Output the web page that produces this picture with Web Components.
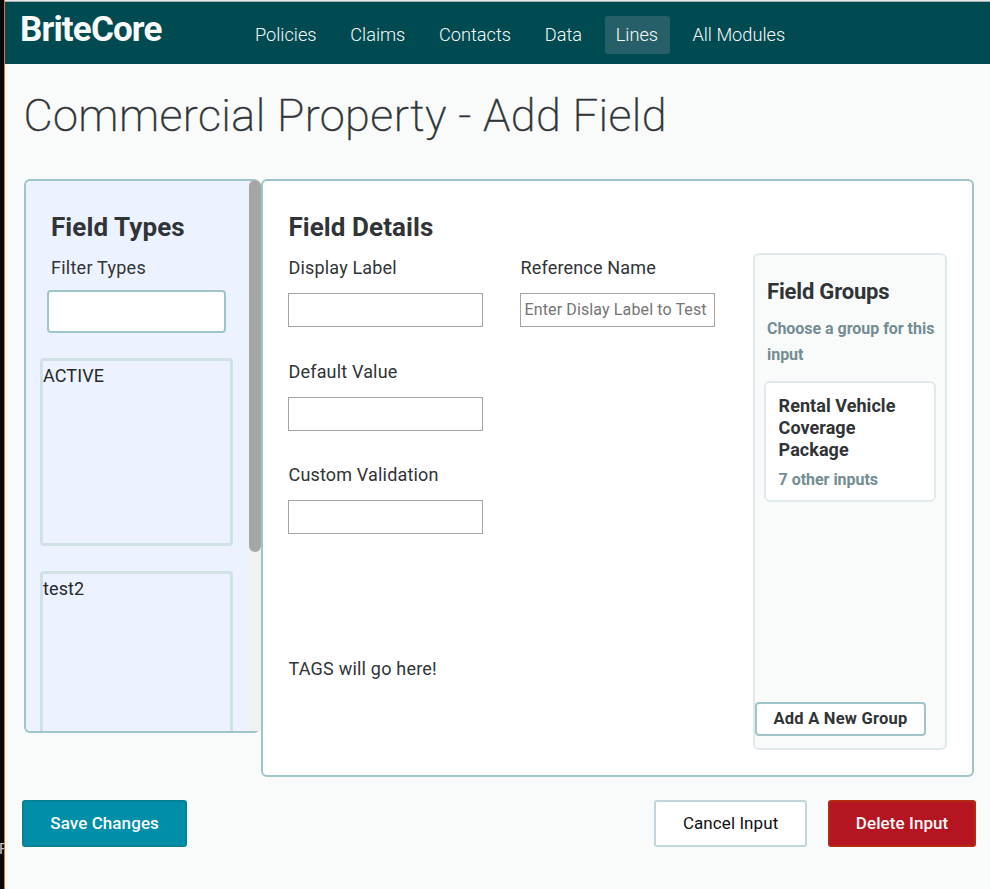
<!DOCTYPE html>
<html lang="en">
<head>
<meta charset="utf-8">
<title>BriteCore</title>
<style>
html,body{margin:0;height:100%;overflow:hidden}
body{font-family:Roboto,"Liberation Sans",sans-serif;color:#303436}
</style>
</head>
<body>
<bc-app></bc-app>
<script>
function define(name, html) {
  const tpl = document.createElement('template');
  tpl.innerHTML = '<style>*{box-sizing:border-box}:host{box-sizing:border-box}</style>' + html;
  customElements.define(name, class extends HTMLElement {
    constructor() {
      super();
      this.attachShadow({mode: 'open'}).append(tpl.content.cloneNode(true));
    }
  });
}

define('bc-nav-item', `
<style>
:host{display:block;padding:0 11px;height:38px;line-height:37px;border-radius:3px;font-size:18.2px;font-weight:300;color:#f9fbfa;white-space:nowrap}
:host([active]){background:#265f68;width:65px}
</style><slot></slot>`);

define('bc-header', `
<style>
:host{display:flex;height:64px;background:linear-gradient(#a9b3b6,#a9b3b6) 0 1px/100% 1px no-repeat,linear-gradient(#e6e8e9,#e6e8e9) 0 0/100% 1px no-repeat,#004a52;padding:2px 0 0 15px;color:#f9fbfa}
.brand{width:224px;flex:none;font-size:35px;font-weight:700;letter-spacing:-.85px;line-height:56px}
nav{display:flex;gap:11.7px;padding-top:14px}
</style>
<div class="brand">BriteCore</div><nav><slot></slot></nav>`);

define('bc-option', `
<style>
:host{display:block;height:188px;flex:none;border:3px solid #d1e2e5;border-radius:4px;font-size:18px;line-height:30px;letter-spacing:.1px;color:#25292b}
</style><slot></slot>`);

define('bc-type-list', `
<style>
:host{display:block;position:relative;width:237px;height:554px;flex:none}
.box{height:100%;margin-right:1px;background:#ecf2ff;border:2px solid #9fc4c9;border-right:0;border-radius:6px;overflow:hidden;padding:27px 28px 0 15px}
h2{margin:0 0 0 10px;font-size:26px;font-weight:700;letter-spacing:.1px;line-height:38px}
label{display:block;margin:8px 0 0 10px;font-size:18px;letter-spacing:.25px;line-height:28px}
.input{height:43px;width:179px;margin:8px 0 0 6px;border:2px solid #9fc4c9;border-radius:4px;background:#fff}
.list{display:flex;flex-direction:column;gap:25px;margin:25px 0 0 -1px;width:193px}
.bar{position:absolute;top:1px;right:0;width:12px;bottom:2px;background:#f1f1f1;border-radius:6px 6px 0 0}
.thumb{height:372px;border-radius:6px;background:#a6a6a6}
</style>
<div class="box"><h2>Field Types</h2><label>Filter Types</label><div class="input"></div><div class="list"><slot></slot></div></div>
<div class="bar"><div class="thumb"></div></div>`);

define('bc-field', `
<style>
:host{display:block;width:195px;font-size:18px}
.label{line-height:28px;letter-spacing:.17px;padding-left:.5px;white-space:nowrap}
.input{height:34px;margin-top:11px;border:1px solid #a5a5a5;background:#fff;padding-left:3.6px;font-size:16px;line-height:32px;letter-spacing:.12px;color:#757575;white-space:nowrap}
</style>
<div class="label"><slot></slot></div><div class="input"><slot name="hint"></slot></div>`);

define('bc-group-card', `
<style>
:host{display:block;width:172px;height:121px;margin:13px 0 0 9px;border:2px solid #e0eaec;border-radius:6px;background:#fff;padding:12px 12px 0 12.6px}
.name{width:130px;font-size:18px;font-weight:700;letter-spacing:.05px;line-height:22px}
.count{margin-top:6px;font-size:16px;font-weight:700;letter-spacing:-.03px;line-height:26px;color:#748d92}
</style>
<div class="name"><slot></slot></div><div class="count"><slot name="count"></slot></div>`);

define('bc-groups', `
<style>
:host{display:flex;flex-direction:column;width:194px;height:497px;border:2px solid #e0eaec;border-radius:6px;background:#f9fbfa}
h3{margin:22px 0 0 12px;font-size:22px;font-weight:700;letter-spacing:-.18px;line-height:30px}
p{margin:9px 0 0 12px;font-size:16px;font-weight:700;letter-spacing:-.03px;line-height:26px;color:#748d92;white-space:nowrap}
.add{margin-top:auto;margin-bottom:12px;width:171px;height:34px;border:2px solid #9fc4c9;border-radius:4px;background:#fff;text-align:center;font-size:16.5px;font-weight:700;letter-spacing:.23px;line-height:29px}
</style>
<h3>Field Groups</h3><p>Choose a group for this<br>input</p><slot></slot><div class="add">Add A New Group</div>`);

define('bc-details', `
<style>
:host{display:flex;width:713px;height:598px;flex:none;background:#fff;border:2px solid #9fc4c9;border-radius:6px;padding:27px 0 0 25px}
.form{width:465px;flex:none}
h2{margin:0 0 0 .4px;font-size:26px;font-weight:700;letter-spacing:.08px;line-height:38px}
.grid{display:grid;grid-template-columns:195px 195px;column-gap:37px;grid-auto-rows:73px;row-gap:30.6px;margin-top:8px}
.tags{margin:121px 0 0 .5px;font-size:18px;letter-spacing:.21px;line-height:28px}
bc-field:nth-of-type(n+3){grid-column:1}
bc-groups{margin-top:45px}
</style>
<div class="form"><h2>Field Details</h2>
<div class="grid">
<bc-field>Display Label</bc-field>
<bc-field>Reference Name<span slot="hint">Enter Dislay Label to Test</span></bc-field>
<bc-field>Default Value</bc-field>
<bc-field>Custom Validation</bc-field>
</div>
<div class="tags">TAGS will go here!</div></div>
<bc-groups><bc-group-card>Rental Vehicle Coverage Package<span slot="count">7 other inputs</span></bc-group-card></bc-groups>`);

define('bc-button', `
<style>
:host{display:block;height:47px;border:2px solid #c1d6db;border-radius:3px;background:#fff;color:#111;text-align:center;font-size:17px;letter-spacing:.08px;line-height:43px;padding-left:.2px}
:host([kind=save]){width:165px;background:#008ea8;border-color:#068297;color:#f9fbfa;font-weight:500}
:host([kind=cancel]){width:153px;margin-left:auto;margin-right:21px}
:host([kind=delete]){width:148px;background:#b51520;border-color:#b22a12;color:#f9fbfa;font-weight:500}
</style><slot></slot>`);

define('bc-app', `
<style>
:host{display:flex;height:889px;background:#f9fbfa}
.edge{width:5px;flex:none;background:#080808;border-right:1px solid #d07a3c;padding-top:839px;overflow:hidden;font-size:15px;line-height:20px;color:#c9c9c9;text-indent:-1px}
.page{flex:1;min-width:0}
h1{margin:0;padding:27px 0 0 18.4px;height:115px;font-size:45px;font-weight:200;letter-spacing:.42px;-webkit-text-stroke:.4px #303436;line-height:50px;white-space:nowrap}
.panels{display:flex;align-items:flex-start;padding-left:19px}
.actions{display:flex;padding:23px 14px 0 17px}
</style>
<div class="edge">F</div>
<div class="page">
<bc-header><bc-nav-item>Policies</bc-nav-item><bc-nav-item>Claims</bc-nav-item><bc-nav-item>Contacts</bc-nav-item><bc-nav-item>Data</bc-nav-item><bc-nav-item active>Lines</bc-nav-item><bc-nav-item>All Modules</bc-nav-item></bc-header>
<h1>Commercial Property - Add Field</h1>
<div class="panels"><bc-type-list><bc-option>ACTIVE</bc-option><bc-option>test2</bc-option></bc-type-list><bc-details></bc-details></div>
<div class="actions"><bc-button kind="save">Save Changes</bc-button><bc-button kind="cancel">Cancel Input</bc-button><bc-button kind="delete">Delete Input</bc-button></div>
</div>`);
</script>
</body>
</html>
